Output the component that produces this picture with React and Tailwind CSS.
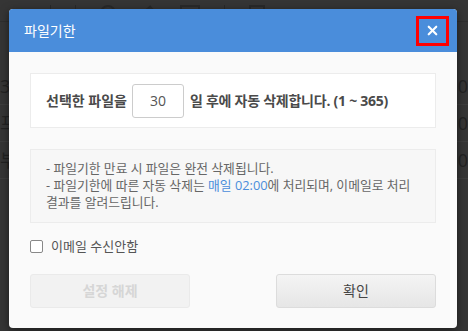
import { X } from 'lucide-react';

const font = { fontFamily: '"Open Sans", "Noto Sans CJK KR", sans-serif' };

const Backdrop = () => (
  <div className="absolute inset-0 bg-[#353535] text-[#1f1f1f]">
    <div className="flex h-[22px] items-end gap-6 border-b border-[#2e2e2e] px-4">
      <span className="text-lg leading-none text-[#1f4a1f]">+</span>
      <span className="h-4 w-px bg-[#2a2a2a]" />
      <span className="h-4 w-px bg-[#2a2a2a]" />
      <span className="h-4 w-4 rounded-full border-2 border-[#2a2a2a]" />
      <span className="h-3 w-4 rotate-[-40deg] bg-[#2a2a2a]" />
      <span className="h-4 w-5 border-2 border-[#2a2a2a]" />
      <span className="h-4 w-px bg-[#2a2a2a]" />
      <span className="h-4 w-4 border-2 border-[#2a2a2a]" />
    </div>
    <div className="mt-[46px] flex flex-col">
      {['3C', '프', '부'].map((t) => (
        <div key={t} className="flex h-[37px] items-center justify-between border-b border-[#3d3d3d] text-[18px] text-[#222]" style={font}>
          <span>{t}</span>
          <span>:0</span>
        </div>
      ))}
    </div>
  </div>
);

export default function App() {
  return (
    <div className="relative h-[331px] w-[468px] overflow-hidden" style={font}>
      <Backdrop />
      <div className="absolute left-[9px] top-[9px] w-[448px] overflow-hidden rounded-[4px] bg-[#fafafa] shadow-[0_2px_8px_rgba(0,0,0,0.5)]">
        <div className="flex h-[43px] items-center justify-between bg-[#4a8ddb] pl-[15px] pr-[8px]">
          <h1 className="text-[14px] text-white">파일기한</h1>
          <button className="flex h-[30px] w-[33px] items-center justify-center border-[3px] border-[#ff0000] text-white">
            <X size={15} strokeWidth={3.5} />
          </button>
        </div>

        <div className="px-[21px] pb-[20px] pt-[21px]">
          <div className="flex h-[55px] items-center border border-[#ececec] bg-white px-[15px] text-[14px] font-bold text-[#4a4a4a]">
            <span>선택한 파일을</span>
            <input
              readOnly
              value="30"
              className="ml-[5px] mr-[6px] h-[34px] w-[52px] rounded-[3px] border border-[#ccc] bg-white text-center text-[14px] font-normal text-[#555] outline-none"
            />
            <span className="tracking-[-0.25px]">일 후에 자동 삭제합니다. (1 ~ 365)</span>
          </div>

          <div className="mt-[21px] break-keep border border-[#ececec] bg-[#f7f7f7] pl-[15px] pr-[8px] pb-[11px] pt-[10px] text-[12.8px] leading-[17px] text-[#666]">
            <p>- 파일기한 만료 시 파일은 완전 삭제됩니다.</p>
            <p>
              - 파일기한에 따른 자동 삭제는 <span className="text-[#4a8ddb]">매일 02:00</span>에 처리되며, 이메일로 처리 결과를 알려드립니다.
            </p>
          </div>

          <label className="mt-[14px] flex items-center gap-[8px] text-[13px] text-[#555]">
            <span className="h-[13px] w-[13px] rounded-[2px] border border-[#888] bg-white" />
            이메일 수신안함
          </label>

          <div className="mt-[17px] flex justify-between">
            <button className="h-[34px] w-[160px] rounded-[3px] border border-[#eaeaea] bg-[#f2f2f2] text-[14px] font-bold text-[#d6d6d6]">
              설정 해제
            </button>
            <button className="h-[34px] w-[160px] rounded-[3px] border border-[#dcdcdc] bg-gradient-to-b from-[#f4f4f4] to-[#e6e6e6] text-[14px] text-[#444]">
              확인
            </button>
          </div>
        </div>
      </div>
    </div>
  );
}
